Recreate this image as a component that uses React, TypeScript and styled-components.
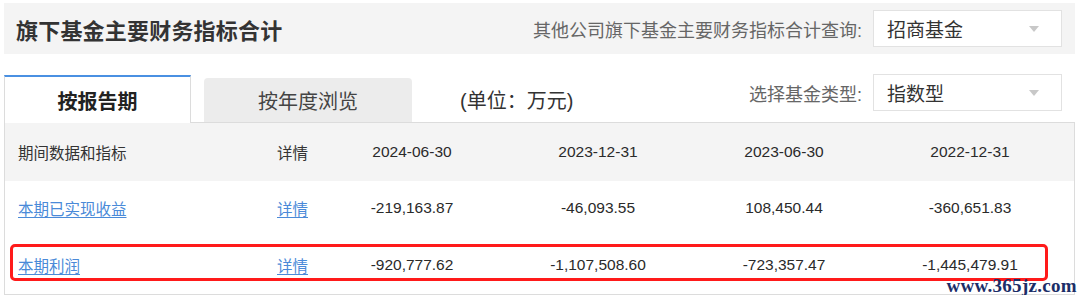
import React from "react";
import styled, { createGlobalStyle } from "styled-components";

const GlobalStyle = createGlobalStyle`
  html, body {
    margin: 0;
    padding: 0;
    background: #fff;
  }
  body {
    font-family: "Liberation Sans", "Noto Sans CJK SC", sans-serif;
    color: #333;
  }
`;

const Page = styled.div`
  width: 1071px;
  padding: 3px 0 0 4px;
`;

const HeaderBar = styled.div`
  height: 51px;
  background: #f4f4f4;
  display: flex;
  align-items: center;
  justify-content: space-between;
  padding: 0 13px 0 12px;
`;

const Title = styled.h2`
  margin: 0;
  font-size: 22px;
  font-weight: bold;
  color: #333;
  letter-spacing: 0.2px;
`;

const QueryGroup = styled.div`
  display: flex;
  align-items: center;
`;

const Label = styled.span`
  font-size: 18px;
  color: #666;
  margin-right: 11px;
`;

const Select = styled.div`
  width: 189px;
  height: 37px;
  box-sizing: border-box;
  background: #fff;
  border: 1px solid #e2e2e2;
  display: flex;
  align-items: center;
  justify-content: space-between;
  padding: 0 22px 0 13px;
  font-size: 19px;
  color: #333;
`;

const Caret = styled.span`
  width: 0;
  height: 0;
  border-left: 5px solid transparent;
  border-right: 5px solid transparent;
  border-top: 6px solid #c8c8c8;
`;

const TabsRow = styled.div`
  margin-top: 19px;
  height: 49px;
  display: flex;
  align-items: flex-end;
  border-bottom: 1px solid #dcdcdc;
`;

const Tab = styled.div<{ $active?: boolean }>`
  box-sizing: border-box;
  display: flex;
  align-items: center;
  justify-content: center;
  font-size: 20px;
  color: ${(p) => (p.$active ? "#222" : "#444")};
  font-weight: ${(p) => (p.$active ? "bold" : "normal")};
  ${(p) =>
    p.$active
      ? `
    width: 187px;
    height: 48px;
    margin-bottom: -1px;
    background: #fff;
    border-top: 2px solid #4a90e2;
    border-left: 1px solid #dcdcdc;
    border-right: 1px solid #dcdcdc;
  `
      : `
    width: 208px;
    height: 44px;
    margin-left: 13px;
    background: #ececec;
    border-radius: 4px 4px 0 0;
  `}
`;

const Unit = styled.span`
  align-self: center;
  margin-left: 48px;
  margin-top: 3px;
  font-size: 20px;
  color: #333;
`;

const TypeGroup = styled(QueryGroup)`
  margin-left: auto;
  margin-right: 13px;
  align-self: flex-start;
  margin-top: 1px;
`;

const Table = styled.div`
  position: relative;
  border-left: 1px solid #dcdcdc;
  border-right: 1px solid #dcdcdc;
  border-bottom: 1px solid #dcdcdc;
`;

const Row = styled.div<{ $head?: boolean; $h: number }>`
  display: grid;
  grid-template-columns: 272px 42px repeat(4, 186px) 1fr;
  align-items: center;
  box-sizing: border-box;
  height: ${(p) => p.$h}px;
  padding-bottom: ${(p) => (p.$head ? 1 : 3)}px;
  background: ${(p) => (p.$head ? "#f4f4f4" : "#fff")};
  font-size: 15.5px;
  color: #333;
`;

const NameCell = styled.div`
  padding-left: 13px;
`;

const DetailCell = styled.div``;

const NumCell = styled.div`
  text-align: center;
  color: #2a2a2a;
`;

const Link = styled.a`
  color: #4a8ad8;
  text-decoration: underline;
  text-underline-offset: 2px;
  cursor: pointer;
`;

const Highlight = styled.div`
  position: absolute;
  left: 5px;
  top: 121px;
  width: 1038px;
  height: 37px;
  box-sizing: border-box;
  border: 3px solid #ff1a1a;
  border-radius: 5px;
  pointer-events: none;
`;

const Watermark = styled.div`
  position: absolute;
  right: -3px;
  bottom: -3px;
  font-family: "Liberation Serif", "DejaVu Serif", serif;
  font-weight: bold;
  font-size: 19px;
  color: #1c2e68;
  letter-spacing: 0.3px;
`;

const dates = ["2024-06-30", "2023-12-31", "2023-06-30", "2022-12-31"];

const rows = [
  {
    name: "本期已实现收益",
    values: ["-219,163.87", "-46,093.55", "108,450.44", "-360,651.83"],
  },
  {
    name: "本期利润",
    values: ["-920,777.62", "-1,107,508.60", "-723,357.47", "-1,445,479.91"],
  },
];

export default function App() {
  return (
    <Page>
      <GlobalStyle />
      <HeaderBar>
        <Title>旗下基金主要财务指标合计</Title>
        <QueryGroup>
          <Label>其他公司旗下基金主要财务指标合计查询:</Label>
          <Select>
            招商基金
            <Caret />
          </Select>
        </QueryGroup>
      </HeaderBar>

      <TabsRow>
        <Tab $active>按报告期</Tab>
        <Tab>按年度浏览</Tab>
        <Unit>(单位：万元)</Unit>
        <TypeGroup>
          <Label>选择基金类型:</Label>
          <Select>
            指数型
            <Caret />
          </Select>
        </TypeGroup>
      </TabsRow>

      <Table>
        <Row $head $h={58}>
          <NameCell>期间数据和指标</NameCell>
          <DetailCell>详情</DetailCell>
          {dates.map((d) => (
            <NumCell key={d}>{d}</NumCell>
          ))}
          <div />
        </Row>
        {rows.map((r, i) => (
          <Row key={r.name} $h={i === 0 ? 57 : 56}>
            <NameCell>
              <Link>{r.name}</Link>
            </NameCell>
            <DetailCell>
              <Link>详情</Link>
            </DetailCell>
            {r.values.map((v, j) => (
              <NumCell key={j}>{v}</NumCell>
            ))}
            <div />
          </Row>
        ))}
        <Highlight />
        <Watermark>www.365jz.com</Watermark>
      </Table>
    </Page>
  );
}
